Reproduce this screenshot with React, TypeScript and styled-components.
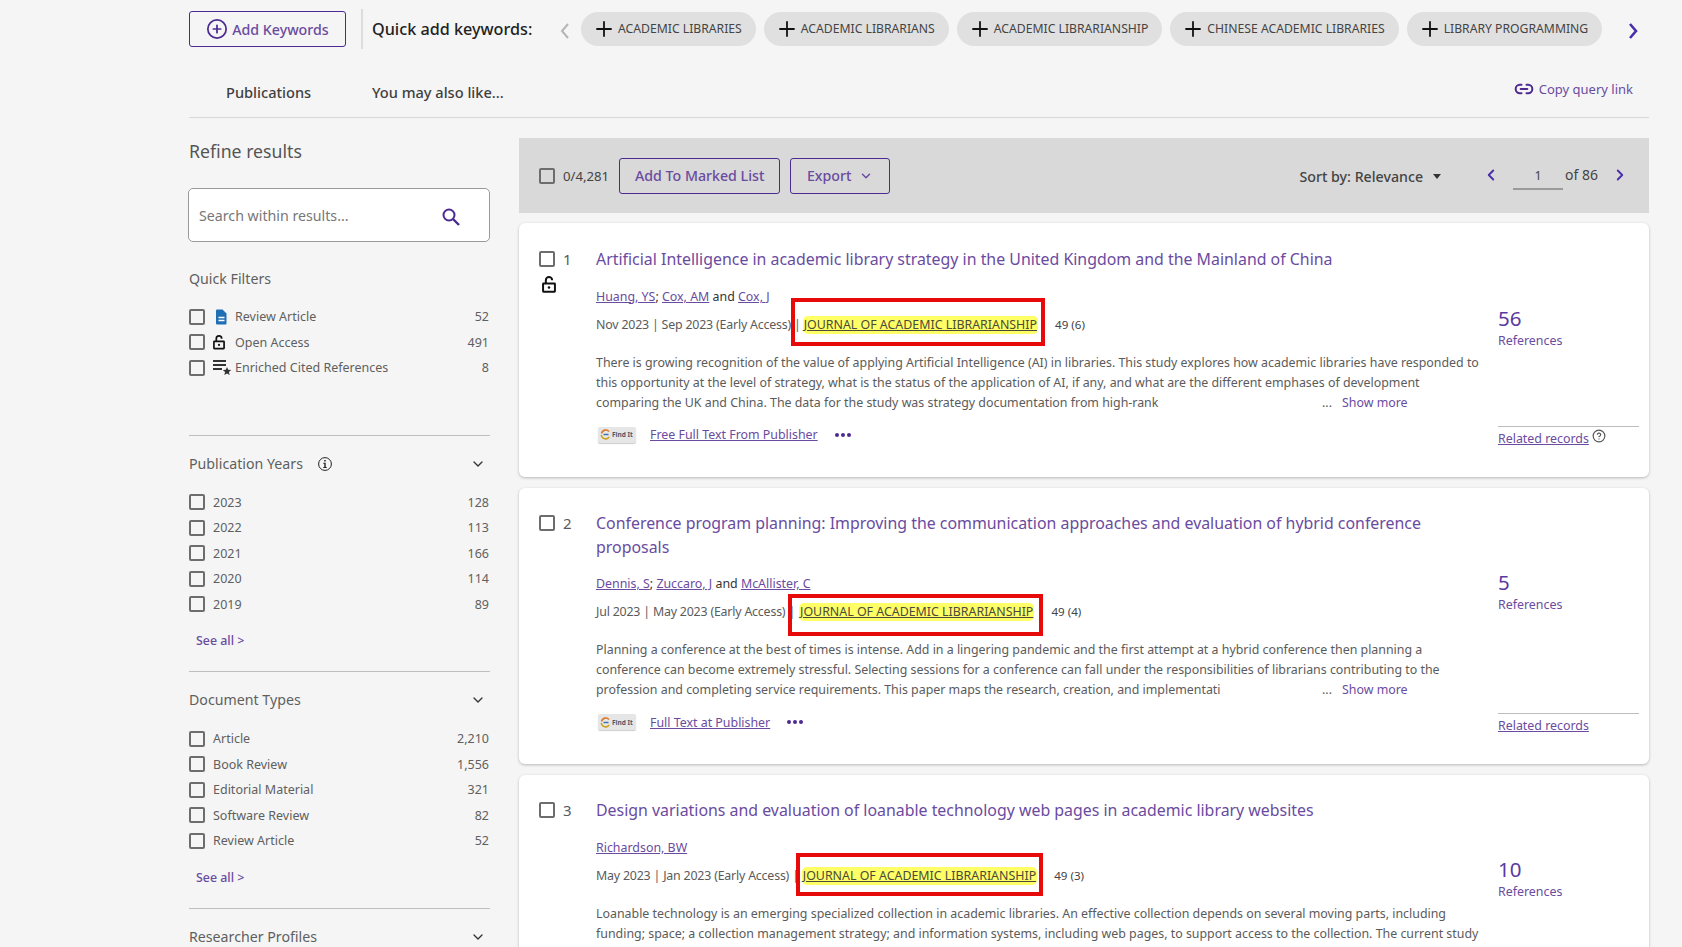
import React from "react";
import styled, { createGlobalStyle } from "styled-components";
import { ChevronDown, ChevronLeft, ChevronRight, Plus, CirclePlus, Link2, CircleHelp } from "lucide-react";

const purple = "#4c2a92";
const linkPurple = "#6a4ba0";
const textGrey = "#5b5b5b";
const font = `"Noto Sans", "Open Sans", sans-serif`;

const GlobalStyle = createGlobalStyle`
  html, body {
    margin: 0;
    height: 947px;
    overflow: hidden;
    background: #f5f5f5;
    font-family: ${font};
    color: ${textGrey};
  }
  * { box-sizing: border-box; }
`;

const Page = styled.div`
  width: 1682px;
  padding: 0 33px 0 189px;
`;

const KeywordBar = styled.div`
  display: flex;
  align-items: center;
  height: 57px;
  white-space: nowrap;
`;

const AddButton = styled.div`
  flex: none;
  display: flex;
  align-items: center;
  justify-content: center;
  gap: 4px;
  width: 157px;
  height: 36px;
  margin-top: 1px;
  border: 1px solid ${purple};
  border-radius: 3px;
  color: ${linkPurple};
  font-size: 14.2px;
  font-weight: 500;
`;

const Separator = styled.div`
  flex: none;
  width: 2px;
  height: 40px;
  background: #dcdcdc;
  margin: 0 9px 0 15px;
`;

const QuickLabel = styled.div`
  flex: none;
  width: 182px;
  font-size: 16.2px;
  font-weight: 500;
  color: #222;
`;

const Arrow = styled.div<{ $muted?: boolean }>`
  flex: none;
  display: flex;
  justify-content: center;
  width: 27px;
  margin-left: ${(p) => (p.$muted ? "0" : "10px")};
  padding-top: 4px;
  padding-right: ${(p) => (p.$muted ? "6px" : "0")};
  color: ${(p) => (p.$muted ? "#b5b5b5" : "#4a2eaa")};
`;

const Chip = styled.div`
  flex: none;
  display: flex;
  align-items: center;
  height: 34px;
  margin-right: 8px;
  padding: 0 14px 0 11px;
  gap: 2px;
  border-radius: 17px;
  background: #e0e0e0;
  color: #444;
  font-size: 12.2px;
  svg { color: #111; }
`;

const TabBar = styled.div`
  display: flex;
  align-items: center;
  height: 61px;
  padding-top: 10px;
  border-bottom: 1px solid #d8d8d8;
  font-size: 14.6px;
  color: #3f3f3f;
`;

const Tab = styled.div<{ $w: number }>`
  width: ${(p) => p.$w}px;
  font-weight: 500;
  &:first-child { padding-left: 37px; }
`;

const CopyLink = styled.div`
  margin-left: auto;
  margin-top: -7px;
  padding-right: 16px;
  display: flex;
  align-items: center;
  gap: 5px;
  font-size: 13px;
  color: ${linkPurple};
  svg { color: ${purple}; }
`;

const Columns = styled.div`
  display: grid;
  grid-template-columns: 301px 1130px;
  gap: 29px;
  margin-top: 20px;
`;

const Sidebar = styled.aside``;

const RefineTitle = styled.div`
  font-size: 17.7px;
  line-height: 26px;
  margin-bottom: 24px;
  color: #555;
`;

const SearchBox = styled.div`
  display: flex;
  align-items: center;
  justify-content: space-between;
  width: 302px;
  height: 54px;
  margin-left: -1px;
  padding: 0 29px 0 10px;
  background: #fff;
  border: 1px solid #9a9a9a;
  border-radius: 5px;
  font-size: 14.2px;
  color: #777;
  svg { margin-top: 4px; }
`;

const SectionTitle = styled.div`
  display: flex;
  align-items: center;
  font-size: 14.2px;
  line-height: 20px;
  color: #5f5f5f;
`;

const QuickTitle = styled(SectionTitle)`
  margin-top: 27px;
  margin-bottom: 15px;
`;

const Collapse = styled.div`
  margin-left: auto;
  padding-right: 4px;
  display: flex;
  color: #333;
`;

const InfoMark = styled.div`
  display: flex;
  margin-left: 15px;
`;

const FilterRow = styled.div`
  display: flex;
  align-items: center;
  height: 25.6px;
  font-size: 12.5px;
  color: #5f5f5f;
`;

const Box = styled.span`
  flex: none;
  width: 16px;
  height: 16px;
  border: 2px solid #6d6d6d;
  border-radius: 2px;
  margin-right: 8px;
`;

const RowIcon = styled.span`
  display: flex;
  flex: none;
  width: 22px;
  margin-right: 0;
`;

const Count = styled.span`
  margin-left: auto;
  padding-right: 1px;
`;

const Section = styled.section<{ $top?: number }>`
  border-top: 1px solid #bfbfbf;
  margin-top: ${(p) => p.$top ?? 0}px;
  padding-top: 18px;
`;

const Rows = styled.div`
  margin-top: 15.5px;
`;

const SeeAll = styled.div`
  margin: 14px 0 20px;
  padding-left: 7px;
  font-size: 12.4px;
  font-weight: 500;
  line-height: 20px;
  color: ${linkPurple};
`;

const Results = styled.main``;

const Toolbar = styled.div`
  display: flex;
  align-items: center;
  height: 75px;
  margin-bottom: 10px;
  padding: 0 20px 0 20px;
  background: #d9d9d9;
  font-size: 13.2px;
  color: #444;
`;

const TotalBox = styled(Box)`
  margin-right: 8px;
`;

const ToolButton = styled.div<{ $w: number }>`
  display: flex;
  align-items: center;
  justify-content: center;
  gap: 8px;
  width: ${(p) => p.$w}px;
  height: 36px;
  margin-left: 10px;
  border: 1px solid ${purple};
  border-radius: 3px;
  color: ${linkPurple};
  font-size: 14.2px;
  font-weight: 500;
`;

const SortBy = styled.div`
  margin-left: auto;
  display: flex;
  align-items: center;
  gap: 10px;
  margin-top: 2px;
  font-size: 14.2px;
  font-weight: 500;
  color: #444;
`;

const Caret = styled.span`
  width: 0;
  height: 0;
  border-left: 4px solid transparent;
  border-right: 4px solid transparent;
  border-top: 5px solid #333;
`;

const Pager = styled.div`
  display: flex;
  align-items: center;
  margin-left: 41px;
  margin-top: -2px;
  font-size: 14px;
  svg { color: #4a2eaa; }
`;

const PageInput = styled.div`
  width: 50px;
  height: 27px;
  margin: 4px 2px 0 13px;
  padding-top: 2px;
  line-height: 22px;
  text-align: center;
  border-bottom: 2px solid #9a9a9a;
  font-size: 12.4px;
`;

const OfText = styled.span`
  margin-right: 13px;
`;

const Card = styled.article<{ $h: number; $top: number }>`
  display: flex;
  height: ${(p) => p.$h}px;
  margin-bottom: 11px;
  padding: ${(p) => p.$top}px 10px 0 20px;
  background: #fff;
  border-radius: 6px;
  box-shadow: 0 1px 3px rgba(0, 0, 0, 0.25);
`;

const MarkCol = styled.div`
  flex: none;
  width: 57px;
  font-size: 15px;
`;

const MarkRow = styled.div`
  display: flex;
  align-items: center;
  height: 24px;
  margin-top: -1px;
`;

const LockWrap = styled.div`
  display: flex;
  margin: 5px 0 0 3px;
  color: #111;
`;

const Body = styled.div`
  flex: none;
  width: 882px;
`;

const Title = styled.div`
  margin-bottom: 13px;
  font-size: 15.9px;
  line-height: 23.5px;
  color: ${linkPurple};
`;

const Authors = styled.div`
  font-size: 12.4px;
  line-height: 24px;
  color: #333;
  a { color: ${linkPurple}; text-decoration: underline; }
`;

const Meta = styled.div`
  display: flex;
  align-items: center;
  margin-top: 4px;
  font-size: 12.4px;
  line-height: 24px;
  white-space: nowrap;
`;

const DateText = styled.span`
  letter-spacing: -0.2px;
`;

const Journal = styled.span<{ $left: number }>`
  position: relative;
  margin-left: ${(p) => p.$left}px;
  padding: 0 1px;
  background: #ffff66;
  border-radius: 5px;
  line-height: 18px;
  color: #4a4a3a;
  text-decoration: underline;
`;

const RedFrame = styled.span<{ $inset: string }>`
  position: absolute;
  inset: ${(p) => p.$inset};
  border: 4px solid #e60a0a;
`;

const Issue = styled.span`
  margin-left: 17px;
  font-size: 11.6px;
  color: #444;
`;

const Abstract = styled.div`
  margin-top: 16px;
  font-size: 12.4px;
  line-height: 20px;
`;

const Line = styled.div`
  display: flex;
  white-space: nowrap;
`;

const Clipped = styled.span`
  flex: none;
  width: 726px;
  overflow: hidden;
`;

const ShowMore = styled.span`
  margin-left: 10px;
  color: ${linkPurple};
`;

const LinkRow = styled.div`
  display: flex;
  align-items: center;
  gap: 14px;
  height: 24px;
  margin-top: 10px;
  padding-left: 2px;
  font-size: 12.4px;
  color: ${linkPurple};
`;

const LinkText = styled.span`
  text-decoration: underline;
`;

const FindIt = styled.span`
  display: flex;
  align-items: center;
  gap: 1px;
  width: 38px;
  height: 16px;
  padding-left: 2px;
  border-radius: 2px;
  background: #e6e6e6;
  box-shadow: 0 1px 1px rgba(0, 0, 0, 0.2);
  color: #4d5a6b;
  font-size: 6.5px;
  font-weight: 700;
  white-space: nowrap;
`;

const Dots = styled.span`
  display: flex;
  gap: 2px;
  margin-left: 3px;
  i { width: 4px; height: 4px; border-radius: 50%; background: ${purple}; }
`;

const Side = styled.div`
  flex: none;
  display: flex;
  flex-direction: column;
  width: 141px;
  margin-left: 20px;
  color: ${linkPurple};
`;

const Metric = styled.div`
  margin-top: 57px;
  font-size: 20.5px;
  line-height: 27px;
  color: #5a3aa0;
`;

const MetricLabel = styled.div`
  font-size: 12.4px;
  line-height: 18px;
`;

const Related = styled.div`
  display: flex;
  gap: 3px;
  height: 24px;
  margin-top: auto;
  margin-bottom: 27px;
  border-top: 1px solid #bdbdbd;
  font-size: 12.4px;
  line-height: 24px;
  span { text-decoration: underline; }
  svg { margin-top: 2px; color: #555; }
`;

const Check = ({ label, count, icon }: { label: string; count: string; icon?: React.ReactNode }) => (
  <FilterRow>
    <Box />
    {icon && <RowIcon>{icon}</RowIcon>}
    <span>{label}</span>
    <Count>{count}</Count>
  </FilterRow>
);

const DocIcon = () => (
  <svg width="16" height="16" viewBox="0 0 16 16">
    <path d="M3 1.500a1 1 0 0 1 1-1h5.500l4 4V14.500a1 1 0 0 1-1 1H4a1 1 0 0 1-1-1z" fill="#1f6fb5" />
    <path d="M5.500 8.500h6M5.500 11.500h6" stroke="#fff" strokeWidth="1.3" />
  </svg>
);

const EnrichedIcon = () => (
  <svg width="19" height="17" viewBox="0 0 19 17" fill="#333">
    <path d="M0 1h13v2H0zM0 5h13v2H0zM0 9h9v2H0z" />
    <path d="M14 8l1.200 2.800 3 .2-2.300 2 .8 3-2.700-1.600L11.300 16l.8-3-2.300-2 3-.2z" />
  </svg>
);

const OpenLock = ({ size = 14 }: { size?: number }) => (
  <svg width={size} height={size * 1.2} viewBox="0 0 14 17" fill="none" stroke="#111" strokeWidth="2">
    <rect x="1" y="7.500" width="12" height="8.500" rx="0.500" />
    <path d="M3.800 7.500V4.300a3.200 3.200 0 0 1 6.400 0" />
    <circle cx="7" cy="11.700" r="1.300" fill="#111" stroke="none" />
  </svg>
);

const SearchIcon = () => (
  <svg width="18" height="18" viewBox="0 0 18 18" fill="none" stroke={purple} strokeWidth="2">
    <circle cx="7" cy="7" r="5.500" />
    <path d="M11 11l6 6" strokeWidth="2.400" />
  </svg>
);

const InfoIcon = () => (
  <svg width="14" height="14" viewBox="0 0 14 14" fill="none">
    <circle cx="7" cy="7" r="6.400" stroke="#222" strokeWidth="1" />
    <path d="M5.300 5.800h2.400v4.100h1v1H5.300v-1h1V6.800h-1zM6.200 3h1.500v1.600H6.200z" fill="#222" />
  </svg>
);

const FindItMark = () => (
  <svg width="11" height="11" viewBox="0 0 11 11" fill="none">
    <path d="M9 2.500A4.300 4.300 0 0 0 1.500 4.500" stroke="#d9782a" strokeWidth="1.600" />
    <path d="M1.300 6a4.300 4.300 0 0 0 7.800 2" stroke="#c9a227" strokeWidth="1.600" />
    <path d="M3.500 5.500h5" stroke="#3a6fb0" strokeWidth="1.400" />
  </svg>
);

const NarrowChevron = ({ left, color, weight }: { left?: boolean; color: string; weight: number }) => (
  <svg width="11" height="20" viewBox="0 0 11 20" fill="none" stroke={color} strokeWidth={weight}>
    <path d={left ? "M9 3L3 10l6 7" : "M2 3l6 7-6 7"} />
  </svg>
);

const keywords = ["ACADEMIC LIBRARIES", "ACADEMIC LIBRARIANS", "ACADEMIC LIBRARIANSHIP", "CHINESE ACADEMIC LIBRARIES", "LIBRARY PROGRAMMING"];

const records = [
  {
    n: 1,
    h: 254,
    top: 25,
    title: ["Artificial Intelligence in academic library strategy in the United Kingdom and the Mainland of China"],
    authors: ["Huang, YS", "Cox, AM", "Cox, J"],
    date: "Nov 2023 | Sep 2023 (Early Access) |",
    journalLeft: 2,
    frame: "-18px -7px -12px -12px",
    issue: "49 (6)",
    abstract: [
      "There is growing recognition of the value of applying Artificial Intelligence (AI) in libraries. This study explores how academic libraries have responded to",
      "this opportunity at the level of strategy, what is the status of the application of AI, if any, and what are the different emphases of development",
      "comparing the UK and China. The data for the study was strategy documentation from high-rank",
    ],
    link: "Free Full Text From Publisher",
    refs: "56",
    open: true,
    help: true,
  },
  {
    n: 2,
    h: 276,
    top: 24,
    title: ["Conference program planning: Improving the communication approaches and evaluation of hybrid conference", "proposals"],
    authors: ["Dennis, S", "Zuccaro, J", "McAllister, C"],
    date: "Jul 2023 | May 2023 (Early Access) |",
    journalLeft: 4,
    frame: "-9px -9px -15px -11px",
    issue: "49 (4)",
    abstract: [
      "Planning a conference at the best of times is intense. Add in a lingering pandemic and the first attempt at a hybrid conference then planning a",
      "conference can become extremely stressful. Selecting sessions for a conference can fall under the responsibilities of librarians contributing to the",
      "profession and completing service requirements. This paper maps the research, creation, and implementati",
    ],
    link: "Full Text at Publisher",
    refs: "5",
  },
  {
    n: 3,
    h: 260,
    top: 24,
    title: ["Design variations and evaluation of loanable technology web pages in academic library websites"],
    authors: ["Richardson, BW"],
    date: "May 2023 | Jan 2023 (Early Access) |",
    journalLeft: 3,
    frame: "-14px -6px -11px -6px",
    issue: "49 (3)",
    abstract: [
      "Loanable technology is an emerging specialized collection in academic libraries. An effective collection depends on several moving parts, including",
      "funding; space; a collection management strategy; and information systems, including web pages, to support access to the collection. The current study",
    ],
    refs: "10",
  },
];

export default function App() {
  return (
    <Page>
      <GlobalStyle />
      <KeywordBar>
        <AddButton>
          <CirclePlus size={22} strokeWidth={1.9} color={purple} />
          Add Keywords
        </AddButton>
        <Separator />
        <QuickLabel>Quick add keywords:</QuickLabel>
        <Arrow $muted><NarrowChevron left color="#b5b5b5" weight={2} /></Arrow>
        {keywords.map((k) => (
          <Chip key={k}>
            <Plus size={24} strokeWidth={1.8} />
            {k}
          </Chip>
        ))}
        <Arrow><NarrowChevron color="#4a2eaa" weight={2.6} /></Arrow>
      </KeywordBar>
      <TabBar>
        <Tab $w={183}>Publications</Tab>
        <Tab $w={160}>You may also like...</Tab>
        <CopyLink><Link2 size={20} strokeWidth={2.4} />Copy query link</CopyLink>
      </TabBar>
      <Columns>
        <Sidebar>
          <RefineTitle>Refine results</RefineTitle>
          <SearchBox>Search within results...<SearchIcon /></SearchBox>
          <QuickTitle>Quick Filters</QuickTitle>
          <Check label="Review Article" count="52" icon={<DocIcon />} />
          <Check label="Open Access" count="491" icon={<OpenLock size={12} />} />
          <Check label="Enriched Cited References" count="8" icon={<EnrichedIcon />} />
          <Section $top={54}>
            <SectionTitle>
              Publication Years
              <InfoMark><InfoIcon /></InfoMark>
              <Collapse><ChevronDown size={16} /></Collapse>
            </SectionTitle>
            <Rows>
              <Check label="2023" count="128" />
              <Check label="2022" count="113" />
              <Check label="2021" count="166" />
              <Check label="2020" count="114" />
              <Check label="2019" count="89" />
            </Rows>
            <SeeAll>See all &gt;</SeeAll>
          </Section>
          <Section>
            <SectionTitle>Document Types<Collapse><ChevronDown size={16} /></Collapse></SectionTitle>
            <Rows>
              <Check label="Article" count="2,210" />
              <Check label="Book Review" count="1,556" />
              <Check label="Editorial Material" count="321" />
              <Check label="Software Review" count="82" />
              <Check label="Review Article" count="52" />
            </Rows>
            <SeeAll>See all &gt;</SeeAll>
          </Section>
          <Section>
            <SectionTitle>Researcher Profiles<Collapse><ChevronDown size={16} /></Collapse></SectionTitle>
          </Section>
        </Sidebar>
        <Results>
          <Toolbar>
            <TotalBox />
            0/4,281
            <ToolButton $w={161}>Add To Marked List</ToolButton>
            <ToolButton $w={100}>Export<ChevronDown size={14} strokeWidth={2.5} /></ToolButton>
            <SortBy>Sort by: Relevance<Caret /></SortBy>
            <Pager>
              <ChevronLeft size={18} strokeWidth={2.5} />
              <PageInput>1</PageInput>
              <OfText>of 86</OfText>
              <ChevronRight size={18} strokeWidth={2.5} />
            </Pager>
          </Toolbar>
          {records.map((r) => (
            <Card key={r.n} $h={r.h} $top={r.top}>
              <MarkCol>
                <MarkRow><Box />{r.n}</MarkRow>
                {r.open && <LockWrap><OpenLock /></LockWrap>}
              </MarkCol>
              <Body>
                <Title>{r.title.map((t) => <div key={t}>{t}</div>)}</Title>
                <Authors>
                  {r.authors.length === 1 ? <a>{r.authors[0]}</a> : (
                    <>
                      <a>{r.authors[0]}</a>; <a>{r.authors[1]}</a> and <a>{r.authors[2]}</a>
                    </>
                  )}
                </Authors>
                <Meta>
                  <DateText>{r.date}</DateText>
                  <Journal $left={r.journalLeft}>JOURNAL OF ACADEMIC LIBRARIANSHIP<RedFrame $inset={r.frame} /></Journal>
                  <Issue>{r.issue}</Issue>
                </Meta>
                <Abstract>
                  {r.abstract.map((l, i) =>
                    i === 2 ? (
                      <Line key={i}><Clipped>{l}</Clipped>...<ShowMore>Show more</ShowMore></Line>
                    ) : (
                      <Line key={i}>{l}</Line>
                    )
                  )}
                </Abstract>
                {r.link && (
                  <LinkRow>
                    <FindIt><FindItMark />Find It</FindIt>
                    <LinkText>{r.link}</LinkText>
                    <Dots><i /><i /><i /></Dots>
                  </LinkRow>
                )}
              </Body>
              <Side>
                <Metric>{r.refs}</Metric>
                <MetricLabel>References</MetricLabel>
                {r.link && (
                  <Related>
                    <span>Related records</span>
                    {r.help && <CircleHelp size={14} strokeWidth={2} />}
                  </Related>
                )}
              </Side>
            </Card>
          ))}
        </Results>
      </Columns>
    </Page>
  );
}
